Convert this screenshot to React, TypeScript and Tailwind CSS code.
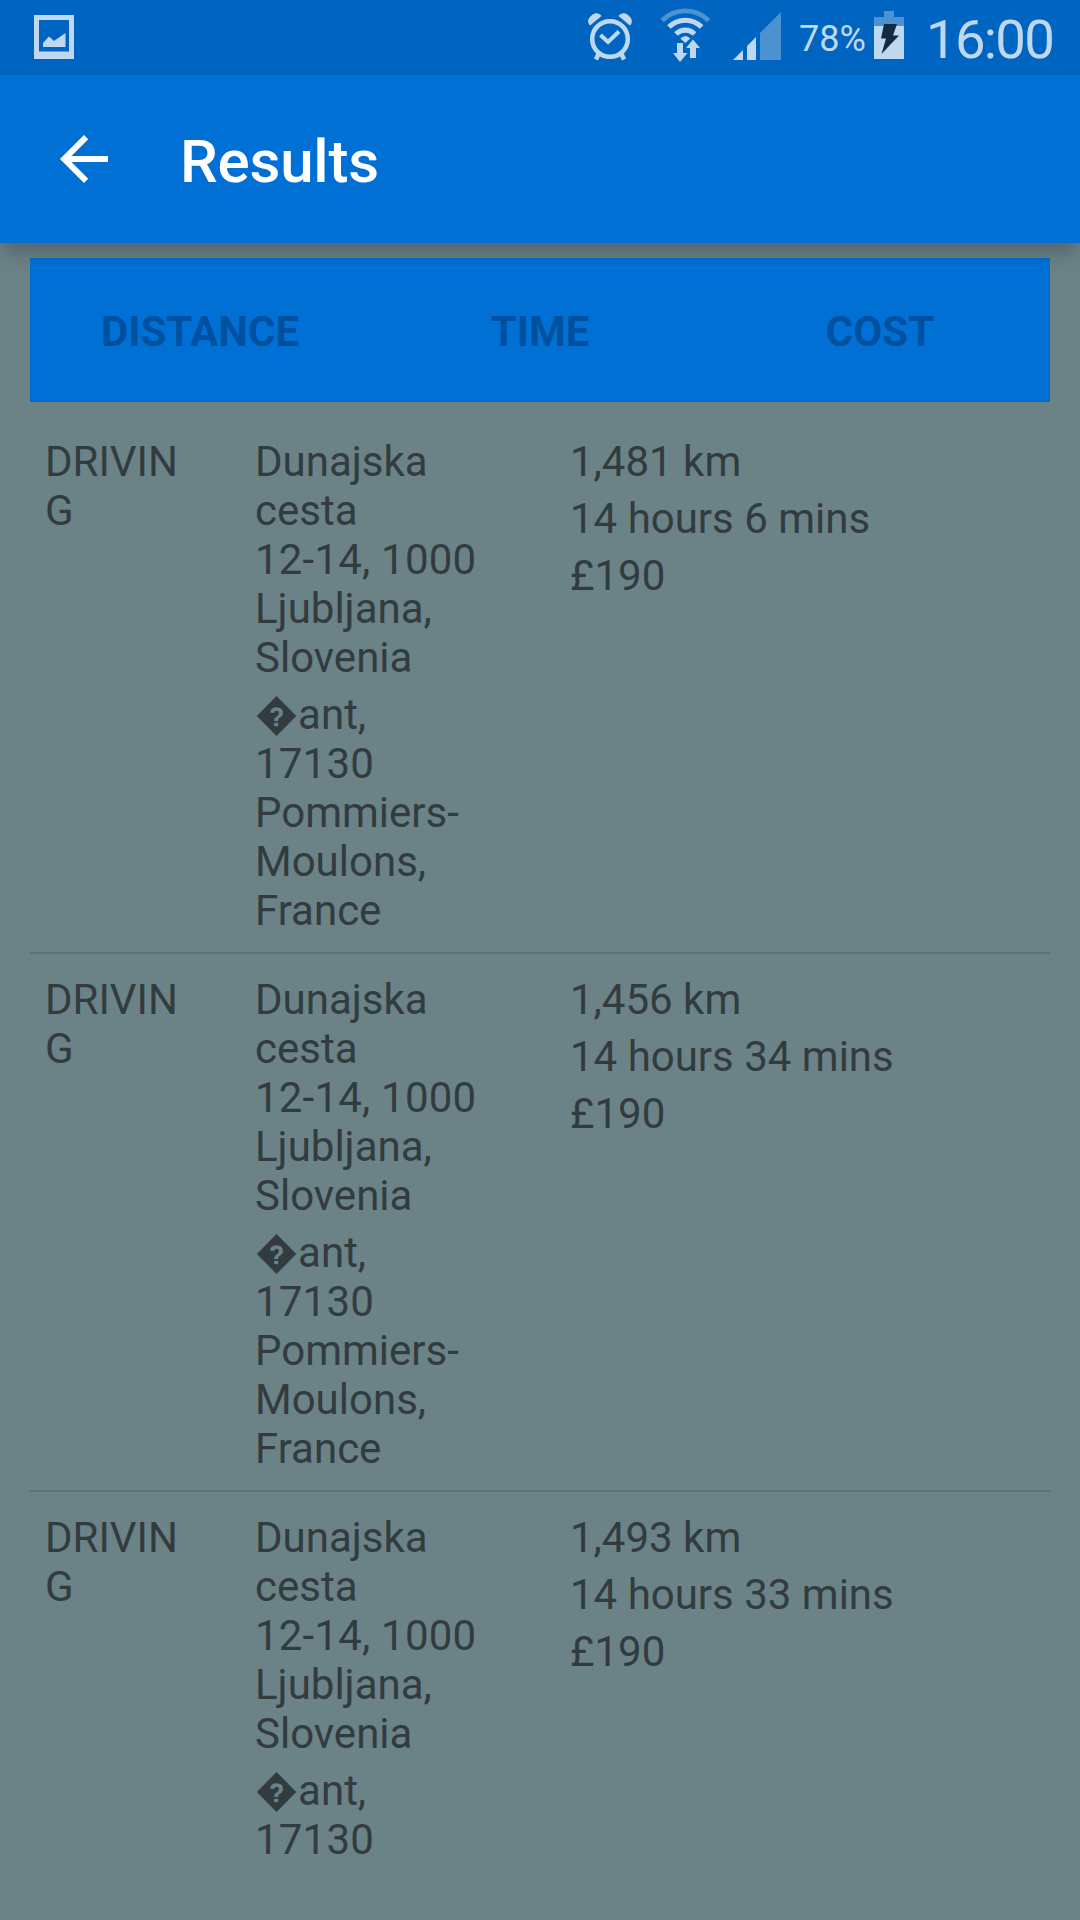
type Route = {
  mode: string[];
  origin: string[];
  destination: string[];
  facts: string[];
};

const ORIGIN = ["Dunajska", "cesta", "12-14, 1000", "Ljubljana,", "Slovenia"];
const DESTINATION = ["\uFFFDant,", "17130", "Pommiers-", "Moulons,", "France"];

const ROUTES: Route[] = [
  { mode: ["DRIVIN", "G"], origin: ORIGIN, destination: DESTINATION, facts: ["1,481 km", "14 hours 6 mins", "£190"] },
  { mode: ["DRIVIN", "G"], origin: ORIGIN, destination: DESTINATION, facts: ["1,456 km", "14 hours 34 mins", "£190"] },
  { mode: ["DRIVIN", "G"], origin: ORIGIN, destination: DESTINATION.slice(0, 2), facts: ["1,493 km", "14 hours 33 mins", "£190"] },
];

function PictureIcon() {
  return (
    <svg className="ml-[34px] h-[75px] w-10 shrink-0" viewBox="34 0 40 75" fill="#bfd8ef">
      <path fillRule="evenodd" d="M34 15H74V59H34ZM39 20V51.500H69V20Z" />
      <path d="M43 47V43L49 36.500L54 41L65.500 33V47Z" />
    </svg>
  );
}

function StatusIcons() {
  return (
    <svg className="h-[75px] w-[219px] shrink-0" viewBox="580 0 219 75" fill="none">
      <g stroke="#bfd8ef">
        <circle cx="610" cy="39" r="17.800" strokeWidth="4.500" />
        <path d="M600.500 35L608 42L619 31.500" strokeWidth="4" />
        <path d="M598.500 54L596 59.500M621.500 54L624 59.500" strokeWidth="4.500" />
      </g>
      <path fill="#bfd8ef" d="M590 25.500L601.500 16C599 12.500 595 12.500 592 15L590 17C587.500 19.500 587.500 23 590 25.500ZM630 25.500L618.500 16C621 12.500 625 12.500 628 15L630 17C632.500 19.500 632.500 23 630 25.500Z" />
      <g strokeWidth="4.700">
        <path stroke="#4c92d3" d="M662 20.500A33 33 0 0 1 708.600 20.500" />
        <path stroke="#bfd8ef" strokeWidth="5.200" d="M669 27A23 23 0 0 1 701.600 27" />
        <path stroke="#bfd8ef" strokeWidth="5.200" d="M676 34A13 13 0 0 1 694.600 34" />
      </g>
      <g fill="#bfd8ef">
        <path d="M680.300 38.500Q685.300 33.500 690.300 38.500L685.300 43Z" />
        <path d="M677 43H683V53H687.500L680 62L673 53H677Z" />
        <path d="M690 58H696V48H700L693 39.500L686 48H690Z" />
        <path d="M733 60L743 50V60ZM747 60V46L756 37V60Z" />
      </g>
      <path fill="#4c92d3" d="M760 60V33L781 12V60Z" />
    </svg>
  );
}

function BatteryIcon() {
  return (
    <svg className="h-[75px] w-[30px] shrink-0" viewBox="874 0 30 75">
      <path fill="#4c92d3" d="M884 11H894V17H904V26H874V17H884Z" />
      <path fill="#bfd8ef" d="M874 26H904V59H874Z" />
      <path fill="#112b45" d="M884 24H897L893 35.500H899L881.500 54L886 38.500H881Z" />
    </svg>
  );
}

function Lines({ lines }: { lines: string[] }) {
  return (
    <div>
      {lines.map((line) => (
        <div key={line} className={/^\d/.test(line) ? "tracking-[0.2px]" : ""}>
          {line}
        </div>
      ))}
    </div>
  );
}

export default function App() {
  return (
    <div className="flex h-[1920px] w-[1080px] flex-col overflow-hidden bg-[#6b8287] font-['Roboto',sans-serif] whitespace-nowrap text-[#323c3f]">
      <div className="flex h-[75px] shrink-0 bg-[#0065c0] text-[#bfd8ef]">
        <PictureIcon />
        <div className="w-[506px]" />
        <StatusIcons />
        <div className="w-[75px] pt-[18px] text-[36px] leading-[42px]">78%</div>
        <BatteryIcon />
        <div className="ml-[22px] pt-[7px] text-[54.500px] leading-[64px] tracking-[-1.700px]">16:00</div>
      </div>
      <header className="relative flex h-[168px] shrink-0 items-center bg-[#0070d5] pl-12 text-white shadow-[0_12px_20px_-4px_rgba(0,0,0,0.25)]">
        <svg className="size-[72px]" viewBox="0 0 24 24" fill="currentColor">
          <path d="M20 11H7.830l5.590-5.590L12 4l-8 8 8 8 1.410-1.410L7.830 13H20v-2z" />
        </svg>
        <h1 className="ml-[60px] pt-[5px] text-[60px] leading-[70px] font-medium tracking-[-0.200px]">Results</h1>
      </header>
      <main className="mx-[30px] mt-[15px]">
        <div className="mb-[14px] grid h-36 grid-cols-3 items-center bg-[#0070d5] pt-[2px] text-center text-[42px] leading-[49px] font-bold text-[#0050a0]">
          <span>DISTANCE</span>
          <span>TIME</span>
          <span>COST</span>
        </div>
        {ROUTES.map((route, i) => (
          <section
            key={i}
            className="grid h-[538px] grid-cols-[210px_315px_1fr] border-b-2 border-[#5f7278] px-[15px] pt-[21px] text-[42px] leading-[49px] last:border-b-0"
          >
            <Lines lines={route.mode} />
            <div className="flex flex-col gap-2">
              <Lines lines={route.origin} />
              <Lines lines={route.destination} />
            </div>
            <div className="flex flex-col gap-2">
              {route.facts.map((fact) => (
                <div key={fact}>{fact}</div>
              ))}
            </div>
          </section>
        ))}
      </main>
    </div>
  );
}
